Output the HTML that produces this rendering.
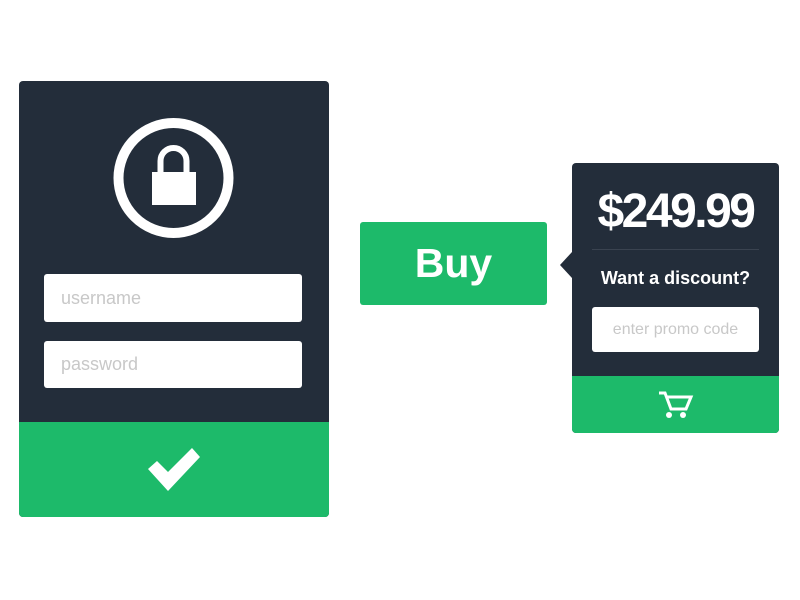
<!DOCTYPE html>
<html><head><style>
body{margin:0;width:800px;height:600px;background:#fff;position:relative;font-family:"Liberation Sans",sans-serif;overflow:hidden}
.a{position:absolute}
.dark{background:#232d3a}
.green{background:#1dba6a}
.inp{background:#fff;border-radius:3px;color:#c8c8c8;box-sizing:border-box}
</style></head><body>
<div class="a dark" style="left:19px;top:81px;width:310px;height:436px;border-radius:4px;overflow:hidden">
  <div class="a green" style="left:0;top:341px;width:310px;height:95px"></div>
</div>
<svg class="a" style="left:0;top:0" width="800" height="600">
  <circle cx="173.5" cy="178" r="55" fill="none" stroke="#fff" stroke-width="10"/>
  <path d="M160.5 172 V161 A13 13 0 0 1 186.5 161 V172" fill="none" stroke="#fff" stroke-width="6"/>
  <rect x="152" y="172" width="44" height="33" fill="#fff"/>
  <polygon points="148,469 157,461 168,472 192,448 200,457 168,491" fill="#fff"/>
  <polygon points="572,252 560,265 572,278" fill="#232d3a"/>
</svg>
<div class="a inp" style="left:44px;top:274px;width:258px;height:48px;font-size:18px;padding:14px 17px">username</div>
<div class="a inp" style="left:44px;top:341px;width:258px;height:47px;font-size:18px;padding:13px 17px">password</div>
<div class="a green" style="left:360px;top:222px;width:187px;height:83px;border-radius:3px;color:#fff;font-weight:bold;font-size:41px;text-align:center;line-height:83px">Buy</div>
<div class="a dark" style="left:572px;top:163px;width:207px;height:270px;border-radius:4px;overflow:hidden">
  <div class="a" style="left:0;top:21px;width:207px;text-align:center;color:#fff;font-weight:bold;font-size:48px;letter-spacing:-2.5px">$249.99</div>
  <div class="a" style="left:20px;top:86px;width:167px;height:1px;background:#3a4350"></div>
  <div class="a" style="left:0;top:105px;width:207px;text-align:center;color:#fff;font-weight:bold;font-size:18px">Want a discount?</div>
  <div class="a inp" style="left:20px;top:144px;width:167px;height:45px;font-size:16px;text-align:center;line-height:45px">enter promo code</div>
  <div class="a green" style="left:0;top:213px;width:207px;height:57px"></div>
</div>
<svg class="a" style="left:0;top:0" width="800" height="600">
  <g fill="none" stroke="#fff" stroke-width="3">
    <path d="M659 393 H665 L671 409 H686 L691 397 H667"/>
  </g>
  <circle cx="669" cy="415" r="3" fill="#fff"/><circle cx="683" cy="415" r="3" fill="#fff"/>
</svg>
</body></html>
